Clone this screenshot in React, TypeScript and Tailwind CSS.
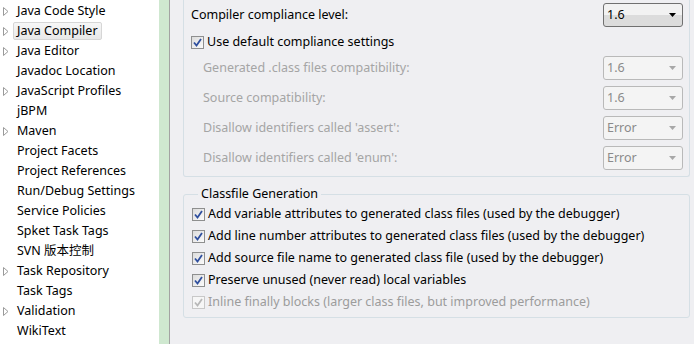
const font = "font-['Noto_Sans','Noto_Sans_CJK_SC',sans-serif]";

type TreeItem = {
  label: string;
  arrow?: boolean;
  selected?: boolean;
};

const items: TreeItem[] = [
  { label: 'Java Code Style', arrow: true },
  { label: 'Java Compiler', arrow: true, selected: true },
  { label: 'Java Editor', arrow: true },
  { label: 'Javadoc Location' },
  { label: 'JavaScript Profiles', arrow: true },
  { label: 'jBPM' },
  { label: 'Maven', arrow: true },
  { label: 'Project Facets' },
  { label: 'Project References' },
  { label: 'Run/Debug Settings' },
  { label: 'Service Policies' },
  { label: 'Spket Task Tags' },
  { label: 'SVN 版本控制' },
  { label: 'Task Repository', arrow: true },
  { label: 'Task Tags' },
  { label: 'Validation', arrow: true },
  { label: 'WikiText' },
];

function Arrow() {
  return (
    <svg width="7" height="9" viewBox="0 0 7 9" className="shrink-0">
      <path d="M1.5 0.5 L6 4.5 L1.5 8.5 Z" fill="#fff" stroke="#9a9a9a" strokeWidth="1" />
    </svg>
  );
}

function TreeRow({ item }: { item: TreeItem }) {
  return (
    <div className="h-[20px] flex items-center">
      <div className="w-[17px] flex pl-[2px] items-center">{item.arrow && <Arrow />}</div>
      {item.selected ? (
        <span className="ml-[-4px] h-[18px] px-[3px] flex items-center rounded-[2px] border border-[#d6d6d6] bg-gradient-to-b from-[#f7f7f7] to-[#e8e8e8]">
          {item.label}
        </span>
      ) : (
        <span>{item.label}</span>
      )}
    </div>
  );
}

function Checkbox({ disabled }: { disabled?: boolean }) {
  return (
    <span
      className={`w-[13px] h-[13px] shrink-0 flex items-center justify-center border ${
        disabled ? 'border-[#c8c8c8] bg-[#f6f6f6]' : 'border-[#8e8f8f] bg-gradient-to-br from-[#dcdcdc] to-[#fbfbfb]'
      }`}
    >
      <svg width="9" height="9" viewBox="0 0 9 9">
        <path
          d="M1 4.5 L3.5 7.5 L8 1"
          fill="none"
          stroke={disabled ? '#b8b8b8' : '#2f4f9e'}
          strokeWidth="1.8"
        />
      </svg>
    </span>
  );
}

function Combo({ value, disabled }: { value: string; disabled?: boolean }) {
  return (
    <div
      className={`w-[80px] h-[24px] shrink-0 rounded-[3px] border flex items-center justify-between pl-[3px] pr-[6px] ${
        disabled
          ? 'border-[#b9b9b9] bg-[#f4f4f4] text-[#8a8a8a]'
          : 'border-[#707070] bg-gradient-to-b from-[#f2f2f2] from-50% to-[#dcdcdc] to-50% text-black'
      }`}
    >
      <span>{value}</span>
      <svg width="7" height="4" viewBox="0 0 7 4">
        <path d="M0 0 H7 L3.5 4 Z" fill={disabled ? '#a8a8a8' : '#000'} />
      </svg>
    </div>
  );
}

function LabelRow({ label, value }: { label: string; value: string }) {
  return (
    <div className="h-[24px] flex items-center justify-between pl-[12px]">
      <span className="text-[#a5a5a5]">{label}</span>
      <Combo value={value} disabled />
    </div>
  );
}

const classfileOptions = [
  'Add variable attributes to generated class files (used by the debugger)',
  'Add line number attributes to generated class files (used by the debugger)',
  'Add source file name to generated class file (used by the debugger)',
  'Preserve unused (never read) local variables',
];

export default function App() {
  return (
    <div className={`w-[694px] h-[344px] flex overflow-hidden text-[12.5px] leading-none text-black ${font}`}>
      <div className="w-[159px] shrink-0 bg-white pt-[1px]">
        {items.map((item) => (
          <TreeRow key={item.label} item={item} />
        ))}
      </div>
      <div className="w-[10px] shrink-0 bg-[#cfe8d0]" />
      <div className="w-px shrink-0 bg-[#a3a3a3]" />
      <div className="flex-1 bg-[#efeff2] pl-[13px] pr-[4px]">
        <div className="border border-t-0 border-[#d5dfe5] rounded-b-[3px] pl-[7px] pr-[6px] pt-[3px] pb-[6px]">
          <div className="h-[24px] flex items-center justify-between">
            <span>Compiler compliance level:</span>
            <Combo value="1.6" />
          </div>
          <div className="h-[20px] mt-[5px] flex items-center gap-[3px]">
            <Checkbox />
            <span>Use default compliance settings</span>
          </div>
          <div className="mt-[4px] flex flex-col gap-[6px]">
            <LabelRow label="Generated .class files compatibility:" value="1.6" />
            <LabelRow label="Source compatibility:" value="1.6" />
            <LabelRow label="Disallow identifiers called 'assert':" value="Error" />
            <LabelRow label="Disallow identifiers called 'enum':" value="Error" />
          </div>
        </div>
        <fieldset className="mt-[9px] border border-[#d5dfe5] rounded-[3px] pl-[8px] pt-[1px] pb-[4px]">
          <legend className="ml-[6px] px-[3px] h-[16px] leading-[16px]">Classfile Generation</legend>
          {classfileOptions.map((opt) => (
            <div key={opt} className="h-[22px] flex items-center gap-[3px]">
              <Checkbox />
              <span>{opt}</span>
            </div>
          ))}
          <div className="h-[22px] flex items-center gap-[3px]">
            <Checkbox disabled />
            <span className="text-[#9c9c9c]">Inline finally blocks (larger class files, but improved performance)</span>
          </div>
        </fieldset>
      </div>
    </div>
  );
}
